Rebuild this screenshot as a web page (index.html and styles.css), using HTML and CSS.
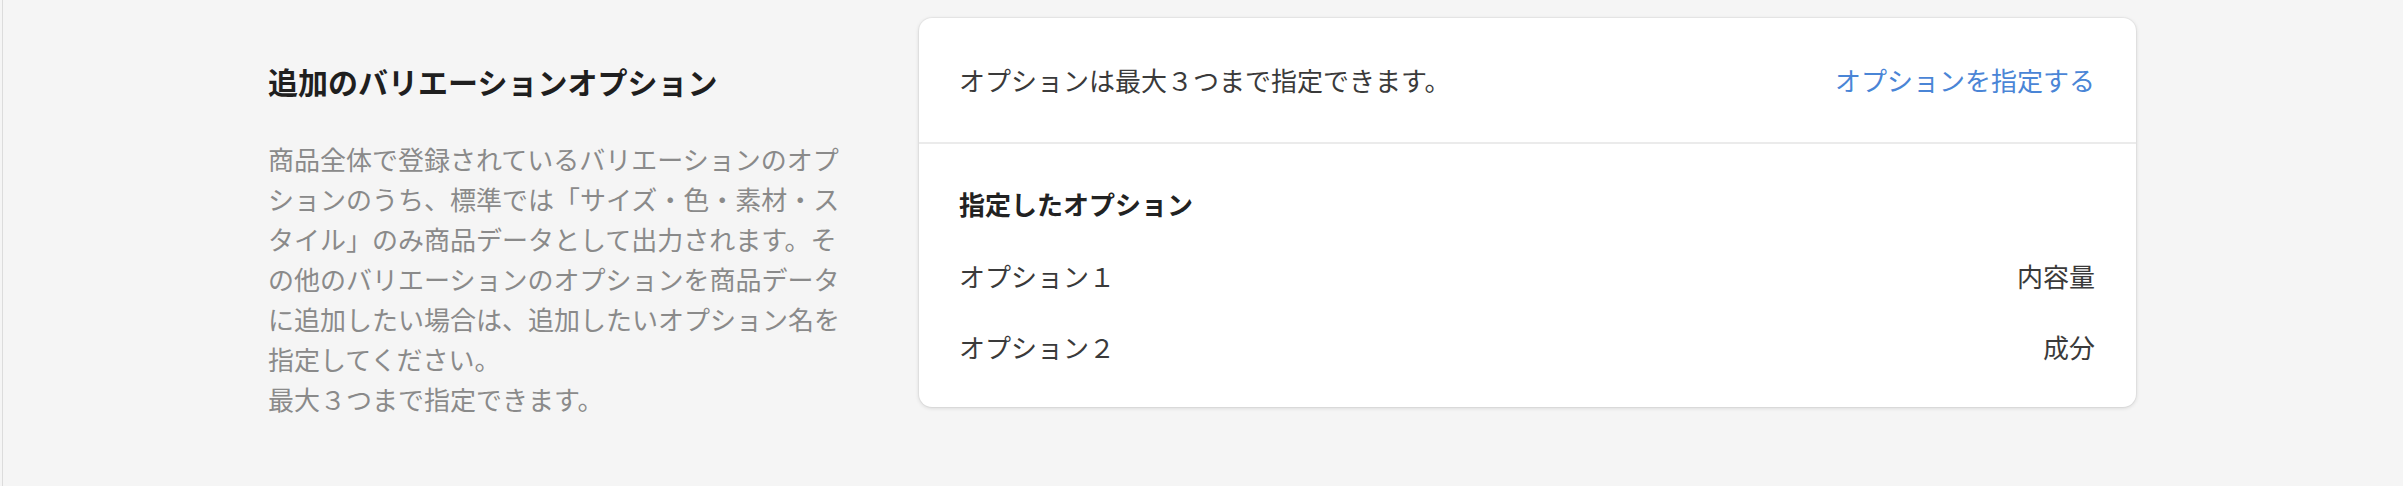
FILE: index.html
```html
<!DOCTYPE html>
<html lang="ja">
<head>
    <meta charset="UTF-8">
    <meta name="viewport" content="width=device-width, initial-scale=1.0">
    <title>追加のバリエーションオプション</title>
    <link rel="stylesheet" href="styles.css">
</head>
<body>
    <div class="page">
        <div class="section">
            <div class="annotation">
                <h2>追加のバリエーションオプション</h2>
                <p class="description">
                    商品全体で登録されているバリエーションのオプションのうち、標準では「サイズ・色・素材・スタイル」のみ商品データとして出力されます。その他のバリエーションのオプションを商品データに追加したい場合は、追加したいオプション名を指定してください。<br>最大３つまで指定できます。
                </p>
            </div>

            <div class="card">
                <div class="card-header">
                    <span>オプションは最大３つまで指定できます。</span>
                    <a href="#" class="link">オプションを指定する</a>
                </div>
                <div class="card-body">
                    <h3>指定したオプション</h3>
                    <ul class="option-list">
                        <li><span>オプション１</span><span>内容量</span></li>
                        <li><span>オプション２</span><span>成分</span></li>
                    </ul>
                </div>
            </div>
        </div>
    </div>
</body>
</html>
```

FILE: styles.css
```css
body {
    margin: 0;
    background-color: #f5f5f5;
    font-family: "Noto Sans CJK JP", "Noto Sans", sans-serif;
    color: #303030;
}

.page {
    margin-left: 2px;
    border-left: 1px solid #dcdcdc;
    min-height: 486px;
    box-sizing: border-box;
}

.section {
    display: grid;
    grid-template-columns: 580px 1fr;
    column-gap: 71px;
    width: 1868px;
    margin: 0 auto;
    padding-top: 18px;
    position: relative;
    left: -1px;
}

/* left column */
.annotation {
    padding-top: 43px;
}

.annotation h2 {
    margin: 0 0 38px;
    font-size: 30px;
    line-height: 40px;
    font-weight: bold;
    color: #1f1f1f;
}

.description {
    margin: 0;
    font-size: 26px;
    line-height: 40px;
    color: #8a8a8a;
}

/* card */
.card {
    align-self: start;
    background-color: #fff;
    border-radius: 13px;
    box-shadow: 0 0 0 1px rgba(0, 0, 0, 0.03), 0 1px 4px rgba(0, 0, 0, 0.14);
    font-size: 26px;
}

.card-header {
    display: flex;
    justify-content: space-between;
    align-items: center;
    padding: 40px 41px 40px 40px;
    line-height: 44px;
    border-bottom: 2px solid #ebebeb;
    color: #3a3a3a;
}

.link {
    color: #4a85d6;
    text-decoration: none;
}

.card-body {
    padding: 40px 41px 40px 40px;
}

.card-body h3 {
    margin: 0;
    font-size: 26px;
    line-height: 40px;
    font-weight: bold;
    color: #222;
}

.option-list {
    list-style: none;
    margin: 32px 0 0;
    padding: 0;
}

.option-list li {
    display: flex;
    justify-content: space-between;
    line-height: 40px;
    color: #3a3a3a;
}

.option-list li + li {
    margin-top: 31px;
}
```
